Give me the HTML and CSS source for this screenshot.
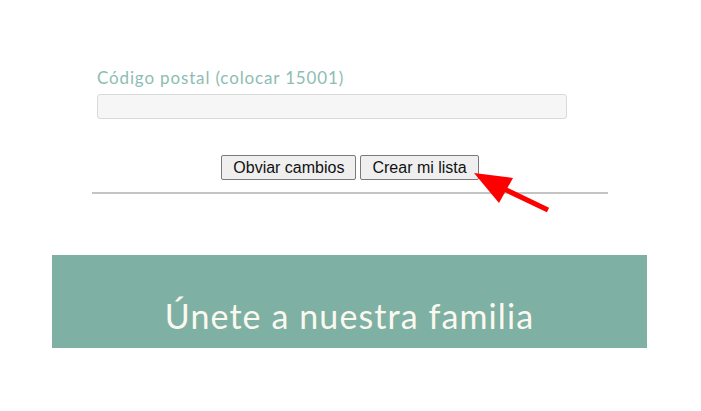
FILE: index.html
```html
<!DOCTYPE html>
<html lang="es">
<head>
<meta charset="utf-8">
<title>Crear mi lista</title>
<link rel="stylesheet" href="styles.css">
</head>
<body>
<div class="page">
  <form class="form">
    <div class="field">
      <label class="label" for="cp">Código postal (colocar 15001)</label>
      <input class="input" id="cp" type="text">
    </div>
    <div class="actions">
      <button type="button" class="btn">Obviar cambios</button>
      <button type="button" class="btn">Crear mi lista</button>
    </div>
    <hr class="rule">
  </form>
  <section class="banner">
    <h2 class="banner-title">Únete a nuestra familia</h2>
  </section>
  <svg class="arrow" width="90" height="50" viewBox="0 0 90 50" aria-hidden="true">
    <polygon points="4,3 43,8 29,33" fill="#ff0000"/>
    <line x1="32" y1="18" x2="78" y2="40" stroke="#ff0000" stroke-width="5"/>
  </svg>
</div>
</body>
</html>
```
FILE: styles.css
```css
html, body {
  margin: 0;
  padding: 0;
  background: #ffffff;
}
.page {
  position: relative;
  width: 701px;
  height: 411px;
  overflow: hidden;
}
.form {
  width: 516px;
  margin-left: 92px;
  padding-top: 66px;
}
.field {
  padding-left: 5px;
  display: flex;
  flex-direction: column;
}
.label {
  font-family: Lato, "Noto Sans", sans-serif;
  font-size: 17px;
  letter-spacing: 0.85px;
  color: #8dbdb2;
  line-height: 24px;
  margin-bottom: 4px;
}
.input {
  box-sizing: border-box;
  width: 470px;
  height: 25px;
  margin: 0;
  border: 1px solid #d9d9d9;
  border-radius: 3px;
  background: #f6f6f6;
}
.actions {
  display: flex;
  justify-content: center;
  gap: 4px;
  margin-top: 36px;
}
.btn {
  box-sizing: border-box;
  height: 25px;
  padding: 0 11px;
  font-family: "Liberation Sans", Arial, sans-serif;
  font-size: 16px;
  color: #111111;
  background: #efefef;
  border: 1px solid #7a7a7a;
  border-radius: 2px;
}
.rule {
  margin: 12px 0 0;
  border: 0;
  border-top: 2px solid #c4c4c4;
  height: 0;
}
.banner {
  width: 595px;
  height: 93px;
  margin: 61px 0 0 52px;
  background: #7eb0a3;
  display: flex;
  align-items: flex-end;
  justify-content: center;
}
.banner-title {
  margin: 0 0 12px;
  font-family: Lato, "Noto Sans", sans-serif;
  font-weight: 400;
  font-size: 34px;
  letter-spacing: 1.1px;
  line-height: 40px;
  color: #fbf8ef;
}
.arrow {
  position: absolute;
  left: 470px;
  top: 170px;
}
```
